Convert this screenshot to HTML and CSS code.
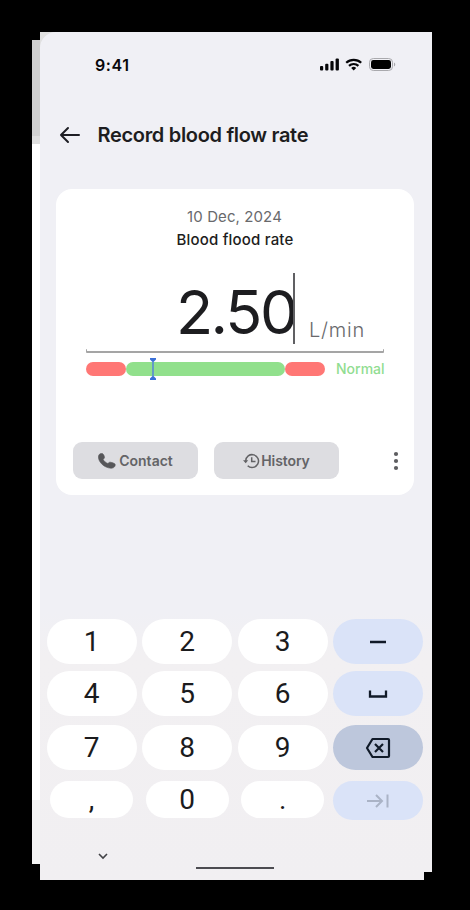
FILE: index.html
```html
<!DOCTYPE html>
<html lang="en">
<head>
<meta charset="utf-8">
<title>Record blood flow rate</title>
<link rel="stylesheet" href="styles.css">
</head>
<body>
<div class="stage">
  <div class="backdrop"></div>
  <main class="phone">
    <div class="status">
      <span class="time">9:41</span>
      <svg class="status-icons" width="76" height="14" viewBox="0 0 76 14">
        <g fill="#050508"><rect y="8" width="3.2" height="4.4" rx="1"/><rect x="5.2" y="5.7" width="3.2" height="6.7" rx="1"/><rect x="10.4" y="3" width="3.2" height="9.4" rx="1"/><rect x="15.6" y=".4" width="3.3" height="12" rx="1"/></g>
        <g fill="none" stroke="#050508" stroke-width="2.2"><path d="M26.2 4.8a11 11 0 0 1 15 0"/><path d="M29 7.9a6.8 6.8 0 0 1 9.4 0"/></g>
        <path d="M31.2 10a3.7 3.7 0 0 1 5 0l-2.5 2.5z" fill="#050508"/>
        <rect x="49.5" y=".5" width="23" height="12" rx="3.8" fill="none" stroke="#a9a9ad"/>
        <rect x="51" y="2" width="20" height="9" rx="2.4" fill="#000"/>
        <path d="M74 4.6v4a2.2 2.2 0 0 0 0-4z" fill="#a9a9ad"/>
      </svg>
    </div>
    <header class="header">
      <svg width="22" height="18" viewBox="0 0 22 18" fill="none" stroke="#1e1e24" stroke-width="2" stroke-linecap="round" stroke-linejoin="round"><path d="M20 9H2M9 2L2 9l7 7"/></svg>
      <h1>Record blood flow rate</h1>
    </header>
    <section class="card">
      <p class="date">10 Dec, 2024</p>
      <p class="label">Blood flood rate</p>
      <div class="reading"><span class="value">2.<span class="wide">5</span>0</span><span class="caret"></span><span class="unit">L/min</span></div>
      <div class="rule"></div>
      <div class="scale">
        <div class="bars">
          <span class="low"></span><span class="mid"></span><span class="high"></span>
          <svg class="marker" width="8" height="22" viewBox="0 0 8 22"><path d="M4 2v18" stroke="#5b8fd0" stroke-width="1.7"/><path d="M1 0h6v1.4L5 3.5H3L1 1.4zM1 22h6v-1.4l-2-2.1H3l-2 2.1z" fill="#3b70d8"/></svg>
        </div>
        <span class="normal">Normal</span>
      </div>
      <div class="actions">
        <div class="button"><svg width="18" height="16" viewBox="0 0 18 16"><path d="M.8 2.2C1.3.9 3 .2 4.4.5c1.200.8 1.900 2.300 2.100 3.700.1.9-.9 1.700-1.400 2.100.8 1.900 2.600 3.400 4.800 4.200.8-.7 1.500-1.500 2.500-1.300 1.600.2 3.200.7 4.400 1.600.8.700.4 2.200-.3 3-.8 1-2.200 1.500-3.600 1.400C6.400 14.900.6 9.400.4 4c0-.6.1-1.200.4-1.800z" fill="#57575a" stroke="#57575a" stroke-width=".6"/></svg><span>Contact</span></div>
        <div class="button history"><svg width="17" height="16" viewBox="0 0 17 16" fill="none" stroke="#626265" stroke-width="1.5"><path d="M2.700 8a6.400 6.400 0 1 1 2 4.700M8.700 4.200v4.300h3.800"/><path d="M0 7.200h5.200L2.700 10.200z" fill="#626265" stroke="none"/></svg><span>History</span></div>
        <svg class="more" width="6" height="20" viewBox="0 0 6 20" fill="#5d5d60"><circle cx="3" cy="3" r="2.100"/><circle cx="3" cy="10" r="2.100"/><circle cx="3" cy="17" r="2.100"/></svg>
      </div>
    </section>
    <div class="keys">
      <span class="key">1</span><span class="key">2</span><span class="key">3</span>
      <span class="key blue"><svg width="24" height="24" viewBox="0 0 24 24"><path d="M4 12h16" stroke="#111a28" stroke-width="2.500"/></svg></span>
      <span class="key">4</span><span class="key">5</span><span class="key">6</span>
      <span class="key blue"><svg width="24" height="24" viewBox="0 0 24 24"><path d="M4 8.500v6h16v-6" fill="none" stroke="#111a28" stroke-width="2.300"/></svg></span>
      <span class="key">7</span><span class="key">8</span><span class="key">9</span>
      <span class="key steel"><svg width="26" height="22" viewBox="0 0 26 22" fill="none" stroke="#101a28" stroke-width="2.200" stroke-linejoin="round"><path d="M7.500 2H23a1 1 0 0 1 1 1v16a1 1 0 0 1-1 1H7.500L2 11z"/><path d="M10 7l8 8M18 7l-8 8"/></svg></span>
      <span class="key short">,</span><span class="key short">0</span><span class="key short">.</span>
      <span class="key blue"><svg width="24" height="16" viewBox="0 0 24 16" fill="none" stroke="#aab3c6" stroke-width="2"><path d="M1 8h15M10 2l6 6-6 6M21.500 1.500v13"/></svg></span>
    </div>
    <footer class="footer">
      <svg class="chevron" width="10" height="7" viewBox="0 0 10 7"><path d="M1 1l4 4 4-4" fill="none" stroke="#424247" stroke-width="1.600"/></svg>
      <span class="home"></span>
    </footer>
    <span class="corner"></span>
  </main>
</div>
</body>
</html>
```
FILE: styles.css
```css
* { box-sizing: border-box; }
body { margin: 0; background: #000; font-family: Inter, "Liberation Sans", sans-serif; color: #1d1d20; }
h1, p { margin: 0; }
svg { display: block; flex: none; }
.stage { display: flex; width: 470px; height: 910px; padding: 32px 38px 30px 32px; overflow: hidden; }
.backdrop { width: 8px; height: 824px; margin-top: 8px; background: linear-gradient(#d0d0d0 0 96px, #dedede 96px 104px, #fff 104px 760px, #f5f5f5 760px); }
.phone { position: relative; width: 392px; height: 848px; background: linear-gradient(#f0f0f5 0 580px, #f2f0f2 625px, #f1eff2 100%); border-top-left-radius: 16px; }
.phone::before { content: ""; position: absolute; z-index: -1; top: 0; left: 0; width: 16px; height: 16px; background: #e0e0e0; }
.status { display: flex; justify-content: space-between; height: 64px; padding: 23px 36px 0 55px; }
.time { font-size: 16px; font-weight: 600; line-height: 20px; letter-spacing: .6px; color: #08080b; }
.status-icons { margin-top: 3px; }
.header { display: flex; align-items: center; height: 78px; padding-left: 19px; gap: 16.5px; }
h1 { font-size: 20px; font-weight: 600; line-height: 24px; letter-spacing: -.32px; white-space: nowrap; }
.card { height: 306px; width: 358px; margin: 15px 0 0 16px; padding-top: 17px; background: #fff; border-radius: 16px; }
.date, .label { text-align: center; white-space: nowrap; }
.date { font-size: 15px; line-height: 22px; color: #69696c; letter-spacing: .1px; padding-right: 1px; }
.label { font-size: 15px; line-height: 24px; font-weight: 500; letter-spacing: .2px; }
.reading { display: flex; height: 70px; margin: 21px 0 0; padding-left: 120px; white-space: nowrap; }
.value { width: 117px; font-size: 61px; line-height: 78px; letter-spacing: -2.8px; }
.wide { letter-spacing: -2.2px; }
.caret { width: 2px; height: 71px; background: #606063; }
.unit { margin: 44px 0 0 14px; font-size: 20px; line-height: 26px; color: #69696c; font-weight: 300; letter-spacing: .8px; }
.rule { width: 298px; height: 4px; margin: 6px 0 0 30px; border: solid #a5a5a5; border-width: 0 1px 2px; border-radius: 1px; }
.scale { display: flex; height: 22px; margin: 5px 0 0 30px; align-items: center; gap: 11px; }
.bars { display: flex; position: relative; width: 239px; height: 14px; }
.bars span { border-radius: 7px; }
.low, .high { width: 40px; background: #ff7775; }
.mid { width: 159px; background: #91e08c; }
.marker { position: absolute; left: 63px; top: -4px; }
.normal { font-size: 14px; font-weight: 500; line-height: 20px; color: #91dd91; }
.actions { display: flex; align-items: center; gap: 16px; margin: 62px 0 0 17px; }
.button { display: flex; align-items: center; justify-content: center; gap: 3px; width: 125px; height: 37px; border-radius: 9px; background: #dddde1; color: #646467; font-size: 14px; font-weight: 600; }
.history { gap: 1px; letter-spacing: -.1px; }
.more { margin-left: 38px; }
.keys { display: grid; grid-template-columns: repeat(4, 90px); column-gap: 5.6px; grid-template-rows: 45px 45px 46px 39px; row-gap: 7px; margin: 124px 0 0 6.5px; width: 378px; }
.key { display: flex; align-items: center; justify-content: center; border-radius: 24px; background: #fff; font: 28px/44px Roboto, sans-serif; color: #1b1b1d; height: 45px; }
.key:nth-child(n+9) { margin-top: 2px; }
.key:nth-child(n+13) { margin-top: 5px; height: 39px; }
.key.short { margin: 5px 3.5px 0; height: 37px; line-height: 37px; }
.blue { background: #dae3f8; }
.steel { background: #bdc7dc; }
.footer { display: flex; align-items: flex-start; height: 24px; margin-top: 38px; padding-left: 58px; }
.home { width: 78px; height: 2px; margin: 14px 0 0 88px; background: #4c4b51; }
.corner { position: absolute; right: 0; bottom: 0; width: 8px; height: 8px; background: #000; }
```
